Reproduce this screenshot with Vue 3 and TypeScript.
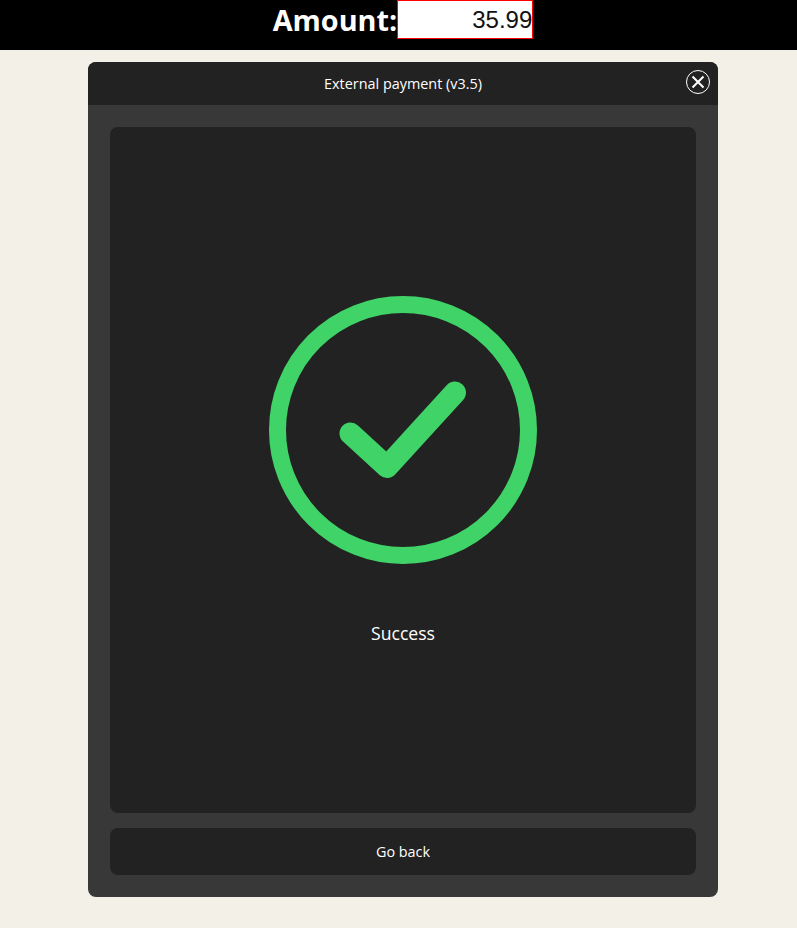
<script setup lang="ts">
const amount = '35.99'
</script>

<template>
  <div class="page">
    <header class="amount-bar">
      <label class="amount-label" for="amount">Amount:</label>
      <input id="amount" class="amount-input" type="text" :value="amount" />
    </header>

    <section class="modal">
      <div class="modal-header">
        <span class="modal-title">External payment (v3.5)</span>
        <button class="close-btn" type="button" aria-label="Close">
          <svg width="24" height="24" viewBox="0 0 24 24" fill="none" stroke="#fff">
            <circle cx="12" cy="12" r="11.5" stroke-width="1" />
            <path d="M6.5 6.5 17.5 17.5M17.5 6.5 6.5 17.5" stroke-width="2" />
          </svg>
        </button>
      </div>

      <div class="modal-body">
        <div class="status-panel">
          <svg class="status-icon" width="268" height="268" viewBox="0 0 268 268" fill="none" stroke="#3fd368">
            <circle cx="134" cy="134" r="125.5" stroke-width="17" />
            <path
              d="M81.5 137.5 118 171 186 96.5"
              stroke-width="22"
              stroke-linecap="round"
              stroke-linejoin="round"
            />
          </svg>
          <p class="status-text">Success</p>
        </div>
        <button class="back-btn" type="button">Go back</button>
      </div>
    </section>
  </div>
</template>

<style>
html,
body {
  margin: 0;
  background: #f3f0e7;
}
</style>

<style scoped>
.page {
  box-sizing: border-box;
  min-height: 928px;
  font-family: 'Open Sans', 'Noto Sans', sans-serif;
}

.amount-bar {
  display: flex;
  justify-content: center;
  height: 50px;
  padding-left: 9px;
  background: #000;
}

.amount-label {
  font-size: 28.8px;
  font-weight: 700;
  line-height: 39px;
  color: #fff;
}

.amount-input {
  box-sizing: border-box;
  width: 136px;
  height: 39px;
  margin: 0;
  padding: 0;
  border: 1px solid #f00;
  border-radius: 0;
  outline: none;
  background: #fff;
  font-family: 'Liberation Sans', Arial, sans-serif;
  font-size: 24px;
  color: #111;
  text-align: right;
}

.modal {
  width: 630px;
  margin: 12px 0 0 88px;
  border-radius: 8px;
  overflow: hidden;
  background: #383838;
}

.modal-header {
  position: relative;
  display: flex;
  align-items: center;
  justify-content: center;
  height: 43px;
  background: #222;
}

.modal-title {
  font-size: 14.4px;
  color: #fff;
}

.close-btn {
  position: absolute;
  top: 8px;
  right: 8px;
  display: flex;
  width: 24px;
  height: 24px;
  padding: 0;
  border: 0;
  background: none;
}

.modal-body {
  display: flex;
  flex-direction: column;
  gap: 15px;
  padding: 22px;
}

.status-panel {
  display: flex;
  flex-direction: column;
  align-items: center;
  height: 686px;
  border-radius: 8px;
  background: #222;
}

.status-icon {
  margin-top: 169px;
}

.status-text {
  margin: 57px 0 0;
  font-size: 17.6px;
  line-height: 24px;
  color: #fff;
}

.back-btn {
  height: 47px;
  padding: 0;
  border: 0;
  border-radius: 8px;
  background: #222;
  font-family: inherit;
  font-size: 14.4px;
  color: #fff;
}
</style>
